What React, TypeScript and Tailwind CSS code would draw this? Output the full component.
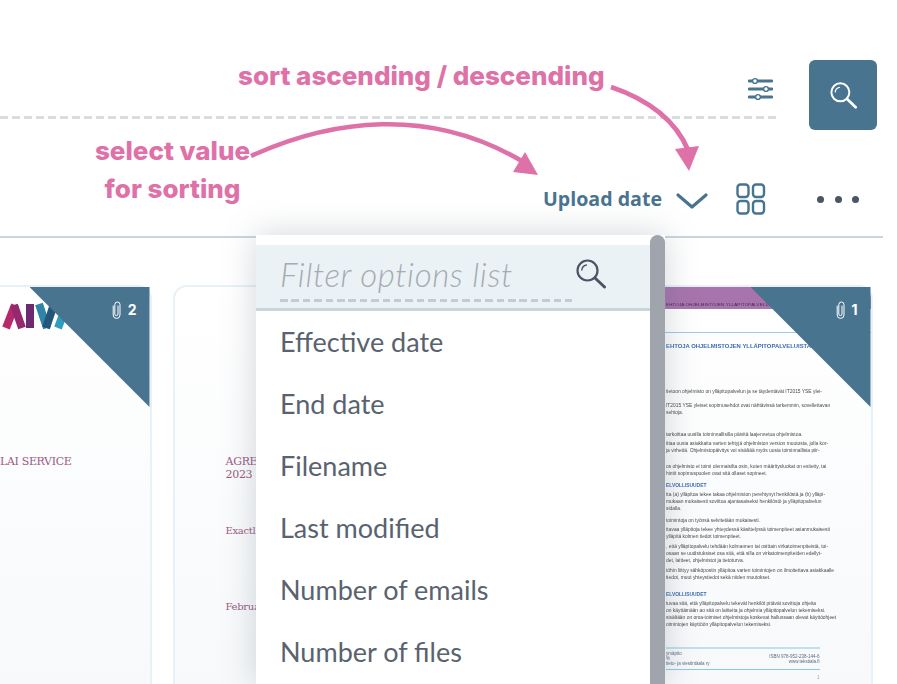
const PINK = "text-[#de72a8]";
const OPTIONS = ["Effective date", "End date", "Filename", "Last modified", "Number of emails", "Number of files"];

// visible fragments of the scanned page, grouped by paragraph
const DOC_BLOCKS: { cls: string; lines: string[]; heading?: boolean }[] = [
  { cls: "mt-[37px]", lines: ["tietoon ohjelmisto on ylläpitopalvelun ja se täydentävät IT2015 YSE ylei-"] },
  { cls: "mt-[7px]", lines: ["IT2015 YSE yleiset sopimusehdot ovat nähtävissä tarkemmin, sovellettavan", "sehtoja."] },
  { cls: "mt-[15px]", lines: ["tarkoittaa uusilla toiminnallisilla päivitä laajennetua ohjelmistoa."] },
  { cls: "mt-[2px]", lines: ["ittaa uusia asiakkaita varten tehtyjä ohjelmiston version muutosta, jolla kor-", "ja virheitä. Ohjelmistopäivitys voi sisältää myös uusia toiminnallisia piir-"] },
  { cls: "mt-[9px]", lines: ["os ohjelmisto ei toimi olennaisilta osin, kuten määritysluokat on esitetty, tai", "hintit sopimuspuolen ovat sitä ollaset sopineet."] },
  { cls: "mt-[5px]", heading: true, lines: ["ELVOLLISUUDET"] },
  { cls: "mt-[2px]", lines: ["tta (a) ylläpitoa tekee takaa ohjelmiston perehtynyt henkilöstä ja (b) ylläpi-", "mukaan mukaisesti sovittua ajantasaiseksi henkilöstö ja ylläpitopalvelun", "sidalla."] },
  { cls: "mt-[5px]", lines: ["toimintoja on työnsä selvitetään mukaisesti."] },
  { cls: "mt-[2px]", lines: ["ttavaa ylläpitoja tekee yhteydessä käsittelyssä toimenpiteet asianmukaisesti", "ylläpitä kolmen tiedot toimenpiteet."] },
  { cls: "mt-[3px]", lines: [", että ylläpitopalvelu tehdään kolmannen tai osittain virkatoimenpiteistä, toi-", "osaan se uudistuksiset osa sitä, että silla on virkatoimenpiteiden edellyt-", "det, laitteet, ohjelmistot ja tietoturva."] },
  { cls: "mt-[3px]", lines: ["töhin liittyy sähköpostin ylläpitoa varten toimintojen on ilmoitettava asiakkaalle", "tiedot, muut yhteystiedot sekä niiden muutokset."] },
  { cls: "mt-[10px]", heading: true, lines: ["ELVOLLISUUDET"] },
  { cls: "mt-[2px]", lines: ["tuvaa sitä, että ylläpitopalvelu tekevät henkilöt pitävät sovittuja ohjeita", "on käyttämään ao sitä on laitteita ja ohjelmia ylläpitopalvelun tekemiseksi.", "sisältään on oma-toimiset ohjelmistoja koskevat hallussaan olevat käyttöohjeet", "oimintojen käyttöön ylläpitopalvelun tekemiseksi."] },
];

function Magnifier({ className, color }: { className: string; color: string }) {
  return (
    <svg viewBox="0 0 30 30" className={className} fill="none" stroke={color}>
      <circle cx="11.5" cy="11.5" r="10" strokeWidth="2.2" />
      <path d="M5.8 11a5.8 5.8 0 0 1 4.6-5" strokeWidth="1.4" strokeLinecap="round" />
      <path d="M19 19l9.5 9" strokeWidth="3" strokeLinecap="round" />
    </svg>
  );
}

function Corner({ count }: { count: number }) {
  return (
    <div className="absolute top-0 right-0 w-[120px] h-[120px] bg-[#48748f] [clip-path:polygon(0_0,100%_0,100%_100%)]">
      <div className="absolute top-[14px] right-[13px] flex items-center gap-[6px] text-white">
        <svg viewBox="0 0 9.5 18" className="w-[9.5px] h-[18px]" fill="none" stroke="currentColor" strokeWidth="1" strokeLinecap="round">
          <path d="M6 5v8a1.6 1.6 0 0 1-3.2 0V3.6a2.6 2.6 0 0 1 5.2 0V14a3.4 3.4 0 0 1-6.8 0V5" />
        </svg>
        <span className="font-['Inter',sans-serif] text-[14px] font-bold leading-none">{count}</span>
      </div>
    </div>
  );
}

function DocPage() {
  return (
    <div className="h-full overflow-hidden rounded-t-[12px] font-['Liberation_Sans',sans-serif] blur-[0.4px]">
      <div className="h-[22px] bg-[#a874ad] pl-[131px] pt-[15px] text-[4.4px] leading-[6px] tracking-[0.2px] text-[#3c2a4a] whitespace-nowrap">
        EHTOJA OHJELMISTOJEN YLLÄPITOPALVELUISTA
      </div>
      <div className="mt-[23px] h-[1px] bg-[#9ecbe6]" />
      <div className="mt-[8px] pl-[131px] text-[5.9px] leading-[10px] font-bold text-[#3b6cb0] whitespace-nowrap">
        EHTOJA OHJELMISTOJEN YLLÄPITOPALVELUISTA
      </div>
      <div className="pl-[131px] text-[4.9px] leading-[7px] text-[#4a4a4a] whitespace-nowrap">
        {DOC_BLOCKS.map((b, i) => (
          <div key={i} className={b.cls}>
            {b.lines.map((l) => (
              <div key={l} className={b.heading ? "font-bold text-[#3b6cb0]" : ""}>
                {l}
              </div>
            ))}
          </div>
        ))}
      </div>
      <div className="mt-[19px] ml-[131px] mr-[51px] h-[2px] bg-[#bfe0f0]" />
      <div className="ml-[131px] mr-[51px] mt-[2px] flex justify-between text-[4.5px] leading-[5px] text-[#5b6b80]">
        <div>
          ymäpito
          <br />
          %
          <br />
          tieto- ja viestintäala ry
        </div>
        <div className="text-right pt-[3px]">
          ISBN 978-952-238-144-6
          <br />
          www.tekstiala.fi
        </div>
      </div>
      <div className="ml-[131px] mr-[51px] mt-[3px] h-[1px] bg-[#8cc8ee]" />
      <div className="mr-[51px] mt-[5px] text-right text-[4.5px] leading-[5px] text-[#88aaaa]">1</div>
    </div>
  );
}

const CARD = "relative w-[339.5px] h-[460px] shrink-0 rounded-[14px] border-2 border-[#e8f1f6] bg-linear-to-b from-white to-[#f6f8fa]";

export default function App() {
  return (
    <div className="relative w-[897px] h-[684px] overflow-hidden bg-white font-['Inter',sans-serif]">
      {/* top row */}
      <div className="flex pt-[60px]">
        <div className="w-[780px] h-[59px] flex flex-col justify-end">
          <div className="flex justify-end pr-[7px] pb-[15px]">
            <svg viewBox="0 0 25 24" className="w-[25px] h-[24px]" fill="none" stroke="#48748f" strokeWidth="2.8" strokeLinecap="round">
              <path d="M1 4h23M1 12h23M1 20h23" />
              <g fill="#fff" strokeWidth="1.4">
                <circle cx="7" cy="4" r="2.4" />
                <circle cx="18" cy="12" r="2.4" />
                <circle cx="10" cy="20" r="2.4" />
              </g>
            </svg>
          </div>
          <div className="h-[3px] bg-[repeating-linear-gradient(90deg,#d8dee0_0_8px,transparent_8px_12px)]" />
        </div>
        <div className="ml-[29px] w-[68px] h-[70px] rounded-[6px] bg-[#48748f] flex items-center justify-center">
          <Magnifier className="w-[27px] h-[27px]" color="#fff" />
        </div>
      </div>

      {/* sort row */}
      <div className="w-[883px] h-[108px] border-b-2 border-[#c9d6dc] flex items-end justify-end pb-[24px] pr-[24px]">
        <span className="font-['Open_Sans',sans-serif] text-[19.6px] font-bold leading-[26px] text-[#48748f]">Upload date</span>
        <svg viewBox="0 0 32 16" className="ml-[14px] mb-[3px] w-[32px] h-[16px]" fill="none" stroke="#48748f" strokeWidth="3.2" strokeLinecap="round" strokeLinejoin="round">
          <path d="M2 2l14 12L30 2" />
        </svg>
        <svg viewBox="0 0 30 32" className="ml-[28px] mb-[-3px] w-[30px] h-[32px]" fill="none" stroke="#48748f" strokeWidth="2.4">
          <rect x="1.5" y="1.5" width="11" height="12.5" rx="3" />
          <rect x="17" y="1.5" width="11" height="12.5" rx="3" />
          <rect x="1.5" y="18" width="11" height="12.5" rx="3" />
          <rect x="17" y="18" width="11" height="12.5" rx="3" />
        </svg>
        <div className="ml-[51px] mb-[9px] flex gap-[10.5px]">
          <span className="w-[7px] h-[7px] rounded-full bg-[#4b5563]" />
          <span className="w-[7px] h-[7px] rounded-full bg-[#4b5563]" />
          <span className="w-[7px] h-[7px] rounded-full bg-[#4b5563]" />
        </div>
      </div>

      {/* cards */}
      <div className="mt-[47px] ml-[-188px] flex gap-[21px]">
        <div className={CARD}>
          <svg viewBox="0 0 80 30" className="ml-[186px] mt-[15px] w-[80px] h-[30px]" fill="none" strokeWidth="8">
            <path d="M6 26L15 3" stroke="#b8296b" />
            <path d="M14 3L22 26" stroke="#96286f" />
            <path d="M30 2V26" stroke="#6e2a70" />
            <path d="M39 2L47 26" stroke="#2f84a8" />
            <path d="M46 26L54 2" stroke="#24557a" />
            <path d="M58 26L67 2" stroke="#2f9cc0" />
          </svg>
          <div className="ml-[186px] mt-[123px] font-['DejaVu_Serif',serif] text-[11px] leading-[13px] tracking-[-0.35px] text-[#9a5a86] whitespace-nowrap">
            LAI SERVICE
          </div>
          <Corner count={2} />
        </div>
        <div className={CARD}>
          <div className="pl-[51px] pt-[168px] font-['DejaVu_Serif',serif] text-[#9a5a86] whitespace-nowrap">
            <div className="text-[11px] leading-[13px] tracking-[-0.3px]">
              AGRE
              <br />
              2023
            </div>
            <div className="mt-[43px] text-[10px] leading-[13px] tracking-[-0.3px]">Exactl</div>
            <div className="mt-[63px] text-[10px] leading-[13px] tracking-[-0.3px]">Februa</div>
          </div>
        </div>
        <div className={CARD}>
          <DocPage />
          <Corner count={1} />
        </div>
      </div>

      {/* sort value dropdown */}
      <div className="absolute left-[256px] top-[235px] w-[409px] h-[449px] bg-white shadow-[0_0_32px_rgba(90,105,120,0.28)] flex">
        <div className="flex-1 min-w-0">
          <div className="mt-[10px] h-[66px] bg-[#ebf2f6] border-b-[3px] border-[#c9d5dc] pl-[24px] pt-[11px]">
            <div className="w-[292px]">
              <div className="flex items-center justify-between h-[36px]">
                <span className="font-['Lato',sans-serif] text-[33px] font-light italic leading-none tracking-[0.6px] text-[#a5acb1] whitespace-nowrap">Filter options list</span>
                <Magnifier className="w-[30px] h-[30px] mr-[-34px] shrink-0" color="#4b5563" />
              </div>
              <div className="mt-[7px] h-[3px] bg-[repeating-linear-gradient(90deg,#c5ccd1_0_7.5px,transparent_7.5px_11.4px)]" />
            </div>
          </div>
          <div className="pl-[24px] pt-[15px]">
            {OPTIONS.map((o) => (
              <div key={o} className="h-[62px] font-['Lato',sans-serif] text-[27px] leading-[32px] text-[#59636f]">
                {o}
              </div>
            ))}
          </div>
        </div>
        <div className="w-[15px] h-full rounded-t-[8px] bg-[#a0a5ad]" />
      </div>

      {/* annotations */}
      <div className={`absolute left-[238px] top-[59px] text-[26px] font-extrabold leading-[34px] whitespace-nowrap ${PINK}`}>
        sort ascending / descending
      </div>
      <div className={`absolute left-[90px] top-[132px] w-[165px] text-center text-[26px] font-extrabold leading-[38px] ${PINK}`}>
        select value
        <br />
        for sorting
      </div>
      <svg viewBox="0 0 897 684" className="absolute inset-0 w-[897px] h-[684px] pointer-events-none" fill="none">
        <path d="M611 87Q670 107 688 150" stroke="#de72a8" strokeWidth="5" />
        <path d="M675 149L699 146L689 171Z" fill="#de72a8" />
        <path d="M251 156C330 120 430 105 525 163" stroke="#de72a8" strokeWidth="4.5" />
        <path d="M525 152L538 175L513 172Z" fill="#de72a8" />
      </svg>
    </div>
  );
}
